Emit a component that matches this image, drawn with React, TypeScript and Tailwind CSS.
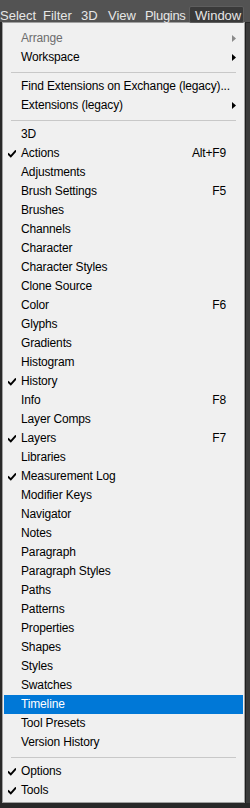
import React from "react";

type Item =
  | { sep: true }
  | { sep?: false; label: string; check?: boolean; shortcut?: string; sub?: boolean; disabled?: boolean; active?: boolean };

const items: Item[] = [
  { label: "Arrange", sub: true, disabled: true },
  { label: "Workspace", sub: true },
  { sep: true },
  { label: "Find Extensions on Exchange (legacy)..." },
  { label: "Extensions (legacy)", sub: true },
  { sep: true },
  { label: "3D" },
  { label: "Actions", check: true, shortcut: "Alt+F9" },
  { label: "Adjustments" },
  { label: "Brush Settings", shortcut: "F5" },
  { label: "Brushes" },
  { label: "Channels" },
  { label: "Character" },
  { label: "Character Styles" },
  { label: "Clone Source" },
  { label: "Color", shortcut: "F6" },
  { label: "Glyphs" },
  { label: "Gradients" },
  { label: "Histogram" },
  { label: "History", check: true },
  { label: "Info", shortcut: "F8" },
  { label: "Layer Comps" },
  { label: "Layers", check: true, shortcut: "F7" },
  { label: "Libraries" },
  { label: "Measurement Log", check: true },
  { label: "Modifier Keys" },
  { label: "Navigator" },
  { label: "Notes" },
  { label: "Paragraph" },
  { label: "Paragraph Styles" },
  { label: "Paths" },
  { label: "Patterns" },
  { label: "Properties" },
  { label: "Shapes" },
  { label: "Styles" },
  { label: "Swatches" },
  { label: "Timeline", active: true },
  { label: "Tool Presets" },
  { label: "Version History" },
  { sep: true },
  { label: "Options", check: true },
  { label: "Tools", check: true },
];

function Check({ color }: { color: string }) {
  return (
    <svg width="8" height="8" viewBox="0 0 8 8" className="block">
      <path d="M0.6 4.2 L2.8 6.4 L7.4 1.2" stroke={color} strokeWidth="1.9" fill="none" strokeLinecap="square" />
    </svg>
  );
}

function Arrow({ color }: { color: string }) {
  return (
    <svg width="4" height="7" viewBox="0 0 4 7" className="block">
      <path d="M0 0 L4 3.5 L0 7 Z" fill={color} />
    </svg>
  );
}

export default function App() {
  return (
    <div
      className="w-[250px] h-[808px] bg-[#282828] overflow-hidden"
      style={{ fontFamily: '"Liberation Sans", Arial, sans-serif' }}
    >
      <div className="h-[22px] bg-[#535353] text-[13px] text-[#e6e6e6] relative">
        <span className="absolute left-[0px] top-[8px] leading-[15px]">Select</span>
        <span className="absolute left-[43px] top-[8px] leading-[15px]">Filter</span>
        <span className="absolute left-[81px] top-[8px] leading-[15px]">3D</span>
        <span className="absolute left-[108px] top-[8px] leading-[15px]">View</span>
        <span className="absolute left-[145px] top-[8px] leading-[15px] tracking-[-0.3px]">Plugins</span>
        <span className="absolute left-[189px] top-[6px] w-[55px] h-[17px] rounded-[2px] bg-[#3a3a3a] border border-[#5e5e5e] pl-[5px] pt-[1px] leading-[15px]">
          Window
        </span>
      </div>
      <div className="flex">
        <div className="ml-[2px] w-[243px] bg-[#f0f0f0] border border-[#a0a0a0] pt-[6px] pb-[2px] text-[12px] tracking-[-0.15px] text-black">
          {items.map((it, i) => {
            if (it.sep) {
              return (
                <div key={i} className="h-[10px] flex items-center px-[8px]">
                  <div className="h-[1px] w-full bg-[#c8c8c8]" />
                </div>
              );
            }
            const active = !!it.active;
            const textColor = it.disabled ? "text-[#6d6d6d]" : active ? "text-white" : "text-black";
            return (
              <div
                key={i}
                className={`mx-[1px] h-[19px] flex items-center ${active ? "bg-[#0078d7]" : ""} ${textColor}`}
              >
                <div className="w-[17px] shrink-0 flex justify-start pl-[4px]">
                  {it.check ? <Check color={active ? "#fff" : "#000"} /> : null}
                </div>
                <div className="flex-1 min-w-0 leading-[19px] whitespace-nowrap">{it.label}</div>
                <div className="leading-[19px] whitespace-nowrap shrink-0">{it.shortcut ?? ""}</div>
                <div className="w-[17px] shrink-0 flex justify-start pl-[6px]">
                  {it.sub ? <Arrow color={it.disabled ? "#8a8a8a" : "#000"} /> : null}
                </div>
              </div>
            );
          })}
        </div>
        <div className="flex-1 bg-[#3a3a3a] h-[780px] mt-[1px] border-l border-[#1e1e1e]" />
      </div>
    </div>
  );
}
